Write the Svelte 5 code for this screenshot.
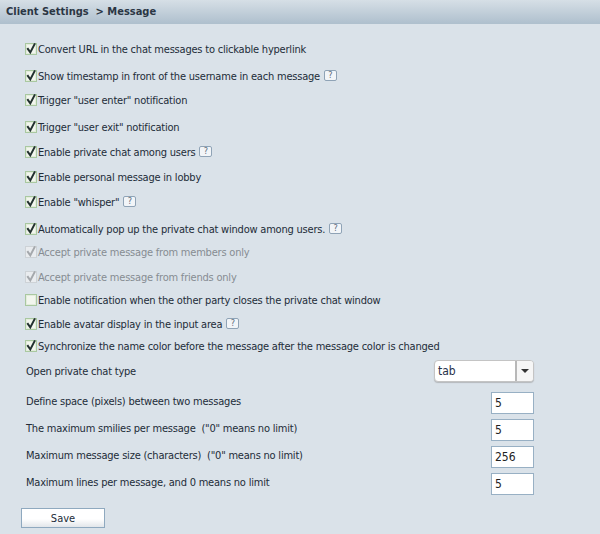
<script>
  const checks = [
    { t: 'Convert URL in the chat messages to clickable hyperlink', h: 27, y: 1 },
    { t: 'Show timestamp in front of the username in each message', h: 24, y: 1, help: 1 },
    { t: 'Trigger "user enter" notification', h: 27, y: 1 },
    { t: 'Trigger "user exit" notification', h: 25, y: 1 },
    { t: 'Enable private chat among users', h: 25, y: 1, help: 1 },
    { t: 'Enable personal message in lobby', h: 25, y: 1 },
    { t: 'Enable "whisper"', h: 27, y: 1, help: 1 },
    { t: 'Automatically pop up the private chat window among users.', h: 23, y: 1, help: 1 },
    { t: 'Accept private message from members only', h: 25, y: 1, off: 1 },
    { t: 'Accept private message from friends only', h: 23, y: 1, off: 1 },
    { t: 'Enable notification when the other party closes the private chat window', h: 24, y: 0 },
    { t: 'Enable avatar display in the input area', h: 22, y: 1, help: 1 },
    { t: 'Synchronize the name color before the message after the message color is changed', h: 25, y: 1 }
  ];
  const fields = [
    { t: 'Define space (pixels) between two messages', v: '5' },
    { t: 'The maximum smilies per message  ("0" means no limit)', v: '5' },
    { t: 'Maximum message size (characters)  ("0" means no limit)', v: '256' },
    { t: 'Maximum lines per message, and 0 means no limit', v: '5' }
  ];
</script>

<div class="page">
  <header class="title">Client Settings &nbsp;&gt; Message</header>
  <main class="body">
    {#each checks as c}
      <div class={`row h${c.h}`} class:off={c.off}>
        <span class="box" class:dim={c.off}>
          {#if c.y}
            <svg width="12" height="12" viewBox="0 0 12 12"><path d="M2.3 5.2 L5.3 9.4 L10 .4" fill="none" stroke={c.off ? '#a4a8ac' : '#22302f'} stroke-width="2"/></svg>
          {/if}
        </span>
        <span class="label">{c.t}</span>
        {#if c.help}<span class="help">?</span>{/if}
      </div>
    {/each}
    <div class="row select-row">
      <span class="plain">Open private chat type</span>
      <div class="select"><span class="value">tab</span><span class="arrow"><i></i></span></div>
    </div>
    {#each fields as f}
      <div class="row field">
        <span class="plain">{f.t}</span>
        <span class="input">{f.v}</span>
      </div>
    {/each}
    <button class="save">Save</button>
  </main>
</div>

<style>
  :global(body) { margin: 0; background: #dae2e9; }
  .page {
    width: 600px; height: 534px; overflow: hidden; background: #dae2e9;
    font-family: "DejaVu Sans", sans-serif; font-stretch: condensed; font-size: 11px; color: #222c38;
  }
  .title {
    height: 24px; line-height: 23px; padding-left: 6px; box-sizing: border-box;
    background: linear-gradient(#d6dfe6, #aebfcd);
    font-weight: 700; color: #2b3644; font-size: 11px;
  }
  .body { padding: 17px 66px 0 25px; display: flex; flex-direction: column; }
  .row { display: flex; align-items: flex-start; white-space: pre; flex: none; line-height: 18px; letter-spacing: -0.21px; }
  .h22 { height: 22px; } .h23 { height: 23px; } .h24 { height: 24px; }
  .h25 { height: 25px; } .h27 { height: 27px; }
  .label { margin-left: 1px; }
  .off .label { color: #868c92; }
  .box {
    width: 10px; height: 10px; margin-top: 2px; flex: none; display: block;
    border: 1px solid #a9c8a0; background: #f2f6ee;
    box-shadow: inset 0 0 0 1px #e3ecdc;
  }
  .box svg { display: block; margin: -1px; overflow: visible; }
  .box.dim { border-color: #cdd2d6; background: #e9ecef; box-shadow: none; }
  .help {
    width: 11px; height: 9px; margin: 2px 0 0 4px; border: 1px solid #8fa3b6; border-radius: 2px;
    background: #f2f5f8; color: #5b6b7b; font-size: 9px; line-height: 9px; text-align: center; flex: none; letter-spacing: 0;
  }
  .plain { margin-left: 1px; }
  .select-row { height: 30px; justify-content: space-between; }
  .select {
    width: 100px; height: 22px; margin-top: -3px; box-sizing: border-box; background: #fff;
    border: 1px solid #c4c4c4; border-radius: 4px; display: flex; box-shadow: 0 1px 1px #b4b8bc;
  }
  .value { flex: 1; padding-left: 3px; line-height: 20px; color: #28324a; font-size: 12px; letter-spacing: 0; }
  .arrow { width: 16px; border-left: 2px solid #b8b8b8; display: flex; align-items: center; justify-content: center; background: #f6f6f6; border-radius: 0 3px 3px 0; }
  .arrow i { display: block; width: 0; height: 0; border: 4px solid transparent; border-top: 4px solid #333; border-bottom: 0; }
  .field { height: 27px; justify-content: space-between; }
  .input {
    width: 43px; height: 22px; margin-top: -1px; box-sizing: border-box; border: 1px solid #98b0c4; background: #fff;
    padding-left: 3px; line-height: 20px; color: #222; font-size: 12px; letter-spacing: 0;
  }
  .save {
    margin-top: 7px; margin-left: -4px; width: 84px; height: 20px; padding: 0; align-self: flex-start;
    border: 1px solid #8fa9bf; background: linear-gradient(#ffffff 55%, #e2e6ea);
    font: inherit; color: #222c38; border-radius: 0;
  }
</style>
